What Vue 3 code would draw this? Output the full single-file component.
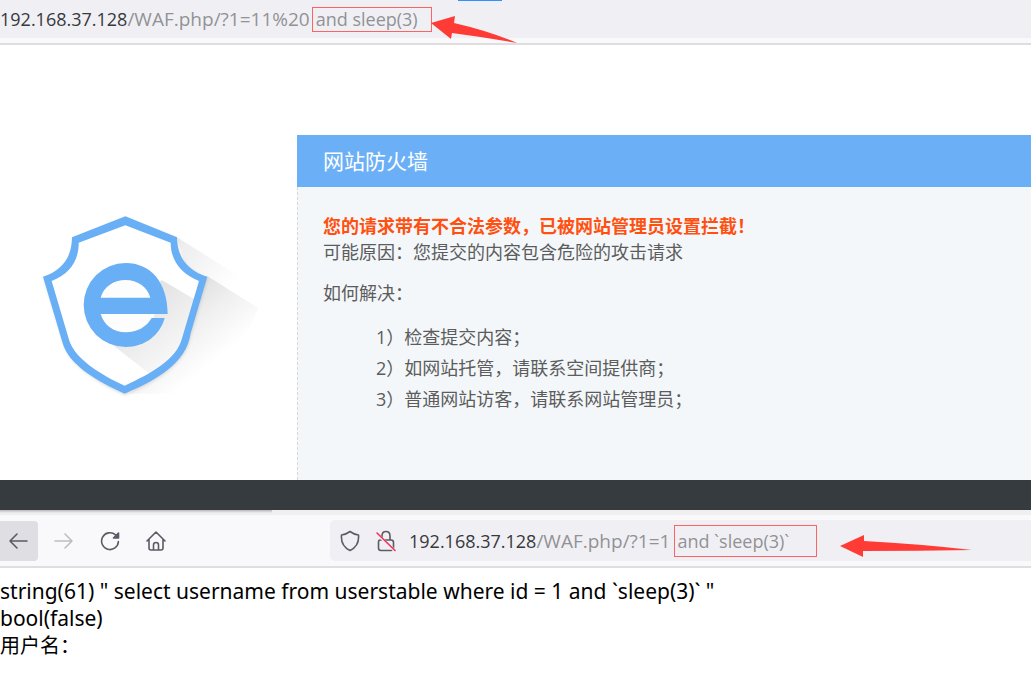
<script setup>
const steps = [
  '1）检查提交内容；',
  '2）如网站托管，请联系空间提供商；',
  '3）普通网站访客，请联系网站管理员；',
]
</script>

<template>
  <main class="shot">
    <section class="browser">
      <header class="topbar">
        <span class="tab-mark"></span>
        <div class="url">
          <span class="host">192.168.37.128</span><span class="path">/WAF.php/?1=11%20</span>
          <mark class="boxed first">and sleep(3)</mark>
        </div>
        <svg class="arrow arrow-top" viewBox="0 0 86 28" aria-hidden="true">
          <path d="M0 7 L24 0 L23 7 Q58 15 86 27 Q52 21 21 17 L20 23 Z" />
        </svg>
      </header>

      <div class="blocked">
        <aside class="logo">
          <svg viewBox="0 0 780 630" aria-hidden="true">
            <defs>
              <linearGradient id="long" gradientUnits="userSpaceOnUse" x1="440" y1="270" x2="600" y2="470">
                <stop offset="0" stop-color="#dadada" />
                <stop offset="0.5" stop-color="#efefef" />
                <stop offset="1" stop-color="#fff" />
              </linearGradient>
              <linearGradient id="high" gradientUnits="userSpaceOnUse" x1="470" y1="130" x2="640" y2="250">
                <stop offset="0" stop-color="#ececec" />
                <stop offset="1" stop-color="#fff" />
              </linearGradient>
              <linearGradient id="inner" gradientUnits="userSpaceOnUse" x1="370" y1="310" x2="500" y2="460">
                <stop offset="0" stop-color="#e4e4e4" />
                <stop offset="1" stop-color="#f9f9f9" />
              </linearGradient>
              <filter id="soft" x="-10%" y="-10%" width="120%" height="120%">
                <feGaussianBlur stdDeviation="5" />
              </filter>
            </defs>
            <path d="M471 112 L700 255 L700 320 L562 228 L500 210Z" fill="url(#high)" />
            <path d="M562 228 L715 325 L600 581 H330 L500 420Z" fill="url(#long)" />
            <path
              d="M316 49 L471 112 C471 170 502 212 562 230 L506 420 C488 490 400 545 314 581 C230 545 150 490 130 430 L69 230 C127 212 158 170 158 112Z"
              fill="#b5b5b5" opacity="0.45" filter="url(#soft)" transform="translate(2 5)"
            />
            <path
              d="M316 66 L462 120 C462 180 494 220 548 236 L496 425 C475 485 400 535 314 568 C230 535 160 485 140 432 L82 236 C136 220 168 180 168 120Z"
              fill="#fff"
            />
            <path d="M425 240 L532 303 L496 425 C475 472 438 500 390 522 L275 433 L317 330Z" fill="url(#inner)" />
            <path
              d="M316 49 L471 112 C471 170 502 212 562 230 L512 400 C500 492 400 545 314 581 C230 545 145 492 128 430 L69 230 C127 212 156 170 156 112Z M316 76 L176 128 C177 184 147 223 95 243 L148 422 C165 475 240 523 314 557 C389 523 470 480 486 415 L537 243 C486 223 452 184 452 128Z"
              fill="#69aff5" fill-rule="evenodd"
            />
            <circle cx="318" cy="318" r="90" fill="#fdfdfd" />
            <path
              d="M443 342 H242 C252 375 280 397 318 397 C352 397 380 380 395 354 H434 C420 405 375 441 317 441 A126 126 0 0 1 317 189 C390 189 443 245 443 342Z M242 293 H391 C382 260 352 240 317 240 C280 240 250 262 242 293Z"
              fill="#69aff5" fill-rule="evenodd"
            />
          </svg>
        </aside>
        <article class="panel">
          <h1>网站防火墙</h1>
          <div class="panel-body">
            <p class="warn">您的请求带有不合法参数，已被网站管理员设置拦截！</p>
            <p>可能原因：您提交的内容包含危险的攻击请求</p>
            <p class="how">如何解决：</p>
            <ul>
              <li v-for="step in steps" :key="step">{{ step }}</li>
            </ul>
          </div>
        </article>
      </div>
    </section>

    <div class="divider"></div>

    <section class="browser">
      <div class="tabstrip"><span></span></div>
      <header class="toolbar">
        <nav>
          <button class="back" type="button" aria-label="Back">
            <svg viewBox="0 0 20 20"><path d="M19 10 H2 M9 3 L2 10 L9 17" /></svg>
          </button>
          <button class="forward" type="button" aria-label="Forward">
            <svg viewBox="0 0 20 20"><path d="M1 10 H18 M11 3 L18 10 L11 17" /></svg>
          </button>
          <button type="button" aria-label="Reload">
            <svg viewBox="0 0 20 20">
              <path d="M18.4 10.5 A8.4 8.4 0 1 1 15.5 3.8" />
              <path d="M18.5 2 V7 H13.5Z" class="solid" />
            </svg>
          </button>
          <button type="button" aria-label="Home">
            <svg viewBox="0 0 20 20">
              <path d="M1 10 L10 1 L19 10 M3 8.5 V17 Q3 19 5 19 H15 Q17 19 17 17 V8.5 M7.5 19 V14 Q7.5 11.5 10 11.5 Q12.5 11.5 12.5 14 V19" />
            </svg>
          </button>
        </nav>
        <div class="address">
          <svg class="shield" viewBox="0 0 20 22" aria-hidden="true">
            <path d="M10 1.5 Q14 4.5 18.5 5 Q19.5 16 10 20.5 Q0.5 16 1.5 5 Q6 4.5 10 1.5Z" />
          </svg>
          <svg class="lock" viewBox="0 0 20 22" aria-hidden="true">
            <path d="M6 10 V6 Q6 1.5 10 1.5 Q14 1.5 14 6 V10 M4 10 H15 Q17.5 10 17.5 12.5 V18 Q17.5 20.5 15 20.5 H5 Q2.5 20.5 2.5 18 V12.5 Q2.5 10 4 10" />
            <path class="halo" d="M1 4 L19 21" />
            <path class="slash" d="M1 3 L19 20.5" />
          </svg>
          <div class="url">
            <span class="host">192.168.37.128</span><span class="path">/WAF.php/?1=1</span>
            <mark class="boxed second">and `sleep(3)`</mark>
          </div>
          <svg class="arrow arrow-bottom" viewBox="0 0 132 24" aria-hidden="true">
            <path d="M0 12 L24 1 L24 7 Q80 10 132 16 Q78 17 23 17 L23 23Z" />
          </svg>
        </div>
      </header>
      <div class="output">
        <p>string(61) " select username from userstable where id = 1 and `sleep(3)` "</p>
        <p>bool(false)</p>
        <p class="label">用户名：</p>
      </div>
    </section>
  </main>
</template>

<style>
body {
  margin: 0;
  background: #fff;
}
</style>

<style scoped>
.shot {
  color: #5c5c5c;
  font-family: "Open Sans", "Noto Sans CJK SC", sans-serif;
  font-size: 18px;
}
p, h1, ul {
  margin: 0;
  padding: 0;
}
.topbar {
  position: relative;
  height: 38px;
  background: #f0f0f4;
  border-bottom: 5px solid #f9f9fb;
  box-shadow: 0 2px 0 #dededf;
  margin-bottom: 2px;
}
.tab-mark {
  position: absolute;
  left: 458px;
  top: 0;
  width: 44px;
  height: 1px;
  background: #3390ff;
}
.url {
  display: flex;
  align-items: center;
  height: 38px;
  color: #929296;
  white-space: nowrap;
}
.host {
  color: #38383d;
}
.path {
  font-size: 19px;
}
.boxed {
  box-sizing: border-box;
  background: none;
  color: inherit;
  border: 1px solid #fa6464;
  padding-left: 3px;
}
.first {
  width: 120px;
  height: 25px;
  line-height: 22px;
  margin-left: 2px;
}
.second {
  width: 143px;
  height: 32px;
  line-height: 30px;
  padding-left: 2px;
  margin-left: 4px;
}
.arrow {
  position: absolute;
  fill: #ff3b36;
}
.arrow-top {
  left: 431px;
  top: 16px;
  width: 86px;
  height: 28px;
  z-index: 1;
}
.blocked {
  display: flex;
  min-height: 435px;
}
.logo {
  flex: 0 0 277px;
  padding: 155px 0 0 20px;
}
.logo svg {
  display: block;
  width: 260px;
  height: 210px;
}
.panel {
  flex: 1;
  margin-top: 90px;
  background: #f3f7fa;
}
h1 {
  background: #6bb0f7;
  color: #fff;
  font-size: 21px;
  font-weight: 400;
  line-height: 52px;
  padding-left: 26px;
}
.panel-body {
  box-sizing: border-box;
  min-height: 293px;
  border-left: 1px dashed #d3d9de;
  padding: 26px 25px;
  line-height: 26px;
}
.warn {
  color: #ff5010;
  font-weight: 700;
}
.how {
  margin-top: 15px;
}
ul {
  list-style: none;
  margin-top: 16px;
  padding-left: 53px;
  line-height: 31px;
}
.divider {
  height: 30px;
  background: #363b3f;
}
.tabstrip {
  height: 5px;
  background: #efeff0;
}
.tabstrip span {
  display: block;
  width: 272px;
  height: 3px;
  background: linear-gradient(#b9b9bc, #efeff0);
}
.toolbar {
  display: flex;
  align-items: center;
  height: 51px;
  background: #f9f9fb;
  border-bottom: 2px solid #dededf;
}
nav {
  display: flex;
  gap: 6px;
  flex: 0 0 330px;
}
button {
  display: flex;
  align-items: center;
  justify-content: center;
  width: 40px;
  height: 40px;
  padding: 0;
  border: 0;
  border-radius: 4px;
  background: none;
}
button svg, .shield, .lock {
  width: 20px;
  fill: none;
  stroke: #5b5b66;
  stroke-width: 1.6;
  stroke-linecap: round;
  stroke-linejoin: round;
}
button svg {
  height: 20px;
}
.solid {
  fill: #5b5b66;
}
.back {
  width: 41px;
  margin-left: -3px;
  background: #dedee3;
}
.forward svg {
  stroke: #bdbdc2;
}
.address {
  position: relative;
  display: flex;
  align-items: center;
  flex: 1;
  height: 41px;
  padding-left: 10px;
  background: #f0f0f4;
  border-radius: 5px 0 0 5px;
}
.shield, .lock {
  height: 22px;
}
.lock {
  margin: 0 13px 0 16px;
}
.lock .halo {
  stroke: #f0f0f4;
  stroke-width: 3;
}
.lock .slash {
  stroke: #f0335f;
}
.arrow-bottom {
  left: 510px;
  top: 14px;
  width: 132px;
  height: 24px;
}
.output {
  padding: 10px 0;
  color: #000;
  font-family: "Noto Sans", "Noto Sans CJK SC", sans-serif;
  font-size: 21px;
  line-height: 27px;
}
.label {
  font-size: 20px;
}
</style>
